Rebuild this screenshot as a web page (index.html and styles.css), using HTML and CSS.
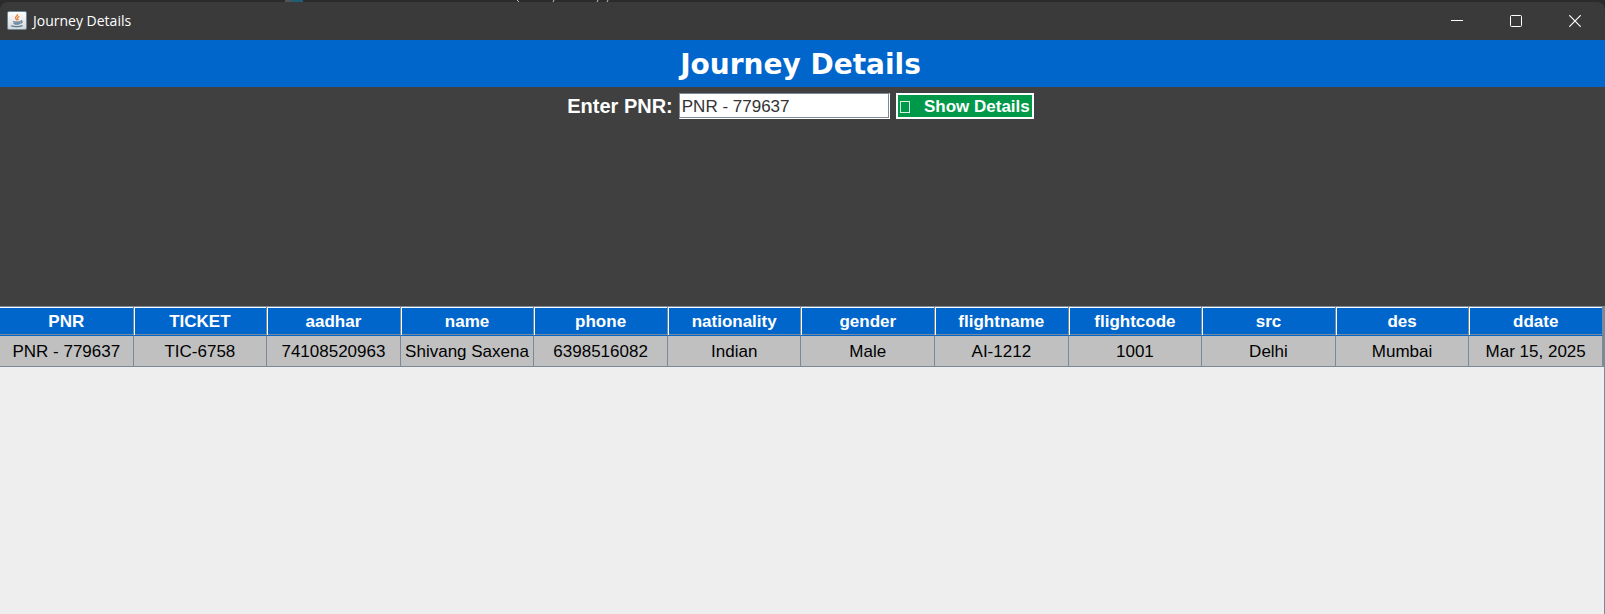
FILE: index.html
```html
<!DOCTYPE html>
<html lang="en">
<head>
<meta charset="utf-8">
<title>Journey Details</title>
<link rel="stylesheet" href="styles.css">
</head>
<body>
<div class="window">
  <div class="backdrop">
    <svg class="backdrop-marks" width="330" height="2" viewBox="0 0 330 2" aria-hidden="true">
      <rect x="0" width="6" height="2" fill="#505457"/>
      <rect x="6" width="12" height="2" fill="#1f5d73"/>
      <path d="M232 0l2 2M269 0l-1 2M313 0l-1 2M323 0l-1 2" stroke="#c4c4c4"/>
    </svg>
  </div>
  <header class="titlebar">
    <svg class="app-icon" width="20" height="19" viewBox="0 0 20 19" aria-hidden="true">
      <defs><linearGradient id="tile" x2="0" y2="1"><stop stop-color="#fff"/><stop offset="1" stop-color="#d3d7da"/></linearGradient></defs>
      <rect x=".5" y=".5" width="19" height="18" rx="1.5" fill="url(#tile)" stroke="#6d8797"/>
      <path d="M10.500 3c1 1.600-2.800 2.800-2 4.300.3.8 1.200 1.200 1.500 2M12.500 5.500c-1.800.6-2.500 1.500-1.700 2.400.4.5.2 1-.3 1.400" fill="none" stroke="#e8843c" stroke-width="1.300"/>
      <path d="M6 10.500c2 .7 5 .7 7.500 0M6.500 12.500c2 .7 4.500.7 6.500 0M13.500 10c2-.6 2.400 1.600-.2 2.300M4 14.800c3 1.200 8.500 1.200 11.500-.2" fill="none" stroke="#587a94" stroke-width="1.200"/>
      <path d="M7 11h6l-.6 2.200h-4.800z" fill="#7590a4"/>
    </svg>
    <span class="titlebar-text">Journey Details</span>
    <button class="window-button" type="button" aria-label="Minimize">
      <svg width="12" height="12" viewBox="0 0 12 12"><path d="M0 5.500h12" stroke="#fff"/></svg>
    </button>
    <button class="window-button" type="button" aria-label="Maximize">
      <svg width="12" height="12" viewBox="0 0 12 12"><rect x=".5" y=".5" width="11" height="11" rx="1" fill="none" stroke="#fff"/></svg>
    </button>
    <button class="window-button" type="button" aria-label="Close">
      <svg width="12" height="12" viewBox="0 0 12 12"><path d="M.3.3l11.400 11.400M11.700.3L.3 11.700" stroke="#fff" stroke-width="1.200"/></svg>
    </button>
  </header>
  <h1 class="banner">Journey Details</h1>
  <form class="search">
    <label class="search-label" for="pnr">Enter PNR:</label>
    <input class="search-input" id="pnr" type="text" value="PNR - 779637">
    <button class="search-button" type="button"><span class="glyph-box"></span>Show Details</button>
  </form>
  <main class="results">
    <table class="journeys">
      <thead>
        <tr><th>PNR</th><th>TICKET</th><th>aadhar</th><th>name</th><th>phone</th><th>nationality</th><th>gender</th><th>flightname</th><th>flightcode</th><th>src</th><th>des</th><th>ddate</th></tr>
      </thead>
      <tbody>
        <tr><td>PNR - 779637</td><td>TIC-6758</td><td>74108520963</td><td>Shivang Saxena</td><td>6398516082</td><td>Indian</td><td>Male</td><td>AI-1212</td><td>1001</td><td>Delhi</td><td>Mumbai</td><td>Mar 15, 2025</td></tr>
      </tbody>
    </table>
  </main>
</div>
</body>
</html>
```
FILE: styles.css
```css
* { box-sizing: border-box; }

body {
  margin: 0;
  background: #2b2b2b;
  font-family: "Liberation Sans", Arial, sans-serif;
  font-size: 17px;
}

.window {
  display: flex;
  flex-direction: column;
  min-height: 100vh;
}

.backdrop {
  height: 2px;
  padding-left: 285px;
}

.backdrop-marks { display: block; }

.titlebar {
  display: flex;
  align-items: center;
  height: 38px;
  padding: 0 1px 0 7px;
  background: #3a3a3a;
  border-radius: 8px 8px 0 0;
  color: #fff;
}

.app-icon { margin-bottom: 1px; }

.titlebar-text {
  flex: 1;
  margin-left: 6px;
  font: 14px/20px "Open Sans", "Noto Sans", sans-serif;
}

.window-button {
  display: flex;
  align-items: center;
  justify-content: center;
  width: 59px;
  height: 38px;
  padding: 0;
  border: 0;
  background: none;
}

.banner {
  margin: 0;
  padding: 7px 4px 4px 0;
  background: #0066cc;
  color: #fff;
  font: bold 28px/36px "DejaVu Sans", Verdana, sans-serif;
  text-align: center;
}

.search {
  display: flex;
  justify-content: center;
  align-items: flex-start;
  gap: 6px;
  padding: 6px 4px 187px 0;
  background: #404040;
}

.search-label {
  color: #fff;
  font-size: 20px;
  font-weight: bold;
  line-height: 26px;
}

.search-input {
  width: 211px;
  height: 26px;
  padding: 1px 2px 0;
  border: 1px solid;
  border-color: #7a8a99 #fff #fff #7a8a99;
  border-radius: 0;
  outline: 0;
  box-shadow: inset -1px -1px #7a8a99;
  background: #fff;
  color: #333;
  font: inherit;
}

.search-button {
  display: flex;
  align-items: center;
  justify-content: space-between;
  width: 138px;
  height: 26px;
  padding: 1px 2px 0;
  border: 2px solid #fff;
  background: #009949;
  color: #fff;
  font: inherit;
  font-weight: bold;
}

.glyph-box {
  width: 10px;
  height: 12px;
  border: 1px solid #d9f0e4;
}

.results {
  flex: 1;
  border-right: 1px solid #7a8a99;
  background: #eee;
}

.journeys {
  width: 100%;
  border-right: 1px solid #7a8a99;
  border-spacing: 0;
  table-layout: fixed;
  text-align: center;
}

.journeys th,
.journeys td {
  height: 30px;
  padding: 2px 0 0;
  border-right: 1px solid #7a8a99;
  line-height: 20px;
  white-space: nowrap;
}

.journeys th {
  border-top: 1px solid #7a8a99;
  border-bottom: 1px solid #0066cc;
  background: #0066cc;
  box-shadow: inset 1px 1px #fff, inset 0 -1px #7a8a99;
  color: #fff;
}

.journeys th:first-child { box-shadow: inset 0 1px #fff, inset 0 -1px #7a8a99; }

.journeys td {
  height: 31px;
  border-bottom: 1px solid #7a8a99;
  background: #c0c0c0;
  color: #000;
}
```
